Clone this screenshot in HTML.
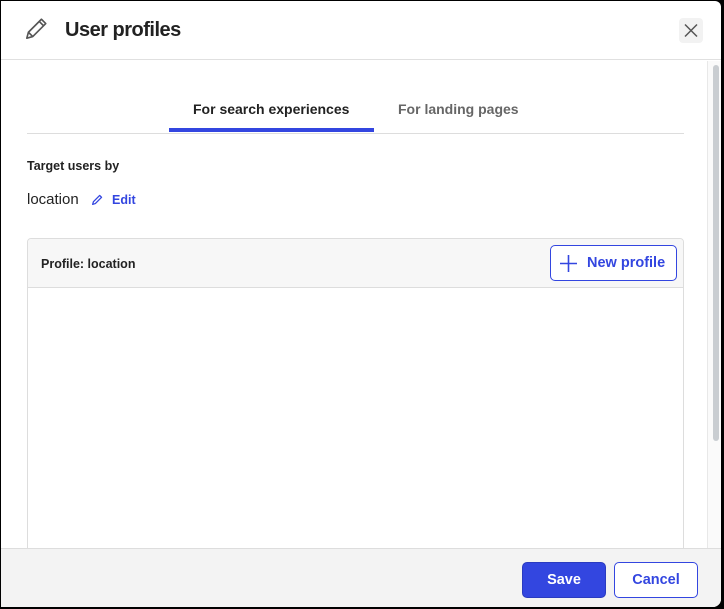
<!DOCTYPE html>
<html><head><style>
*{box-sizing:border-box;margin:0;padding:0}
html,body{width:724px;height:609px;overflow:hidden;background:#000;font-family:"Liberation Sans",Arial,sans-serif}
.dlg{position:absolute;left:1px;top:1px;width:720px;height:606px;background:#fff;border-radius:0 6px 8px 0;overflow:hidden}
.hdr{position:absolute;left:0;top:0;width:720px;height:59px;border-bottom:1px solid #e0e0e0}
.title{position:absolute;left:64px;top:18px;font-size:20px;font-weight:bold;color:#222;letter-spacing:-0.5px}
.close{position:absolute;left:678px;top:17px;width:24px;height:25px;background:#f2f2f2;border-radius:4px}
.tabs{position:absolute;left:26px;top:96px;width:657px;height:37px;border-bottom:1px solid #ddd}
.tab{position:absolute;top:4px;font-size:14px;font-weight:bold}
.t1{left:166px;color:#222}
.t2{left:371px;color:#666}
.ul{position:absolute;left:142px;top:31px;width:205px;height:4px;background:#3346e0}
.lbl{position:absolute;left:26px;top:158px;font-size:12.5px;font-weight:bold;color:#222}
.loc{position:absolute;left:26px;top:190px;font-size:15px;color:#222}
.edit{position:absolute;left:111px;top:192px;font-size:12.5px;font-weight:bold;color:#3346e0}
.card{position:absolute;left:26px;top:237px;width:657px;height:340px;border:1px solid #ddd;border-radius:4px;background:#fff}
.chd{height:49px;background:#f7f7f7;border-bottom:1px solid #ddd;border-radius:4px 4px 0 0}
.ct{position:absolute;left:13px;top:18px;font-size:12.5px;font-weight:bold;color:#222}
.np{position:absolute;left:522px;top:6px;width:127px;height:36px;border:1px solid #3346e0;border-radius:5px;background:#fff;color:#3346e0;font-size:14.5px;font-weight:bold}
.np span{position:absolute;left:36px;top:9px}
.sb{position:absolute;left:706px;top:60px;width:14px;height:490px;border-left:1px solid #e8e8e8;background:#fafafa}
.th{position:absolute;left:5px;top:4px;width:6px;height:376px;background:#c9cdd1;border-radius:3px}
.ftr{position:absolute;left:0;top:547px;width:720px;height:60px;background:#f3f3f3;border-top:1px solid #ddd}
.btn{position:absolute;top:13px;height:36px;border-radius:5px;font-size:14.5px;font-weight:bold;text-align:center;line-height:34px}
.save{left:521px;width:84px;background:#3346e0;color:#fff;border:1px solid #2a3bc0}
.cancel{left:613px;width:84px;background:#fff;color:#3346e0;border:1px solid #3346e0}
</style></head><body>
<div class="dlg">
 <div class="hdr">
  <svg style="position:absolute;left:22px;top:15px" width="26" height="26" viewBox="0 0 24 24" fill="none" stroke="#555" stroke-width="1.5" stroke-linejoin="round"><path d="M3.5 20.5 L5 15 L17 3 L21 7 L9 19 Z M15 5 L19 9 M5 15 L9 19"/></svg>
  <div class="title">User profiles</div>
  <div class="close"><svg width="24" height="25" viewBox="0 0 24 25" stroke="#555" stroke-width="1.5"><path d="M6 6.5 L18 18.5 M18 6.5 L6 18.5"/></svg></div>
 </div>
 <div class="tabs"><div class="tab t1">For search experiences</div><div class="tab t2">For landing pages</div><div class="ul"></div></div>
 <div class="lbl">Target users by</div>
 <div class="loc">location</div>
 <svg style="position:absolute;left:90px;top:192px" width="13" height="13" viewBox="0 0 24 24" fill="none" stroke="#3346e0" stroke-width="2.4" stroke-linejoin="round"><path d="M3 21 L4.5 16 L16 4.5 L19.5 8 L8 19.5 Z"/></svg>
 <div class="edit">Edit</div>
 <div class="card"><div class="chd"></div><div class="ct">Profile: location</div>
  <div class="np"><svg style="position:absolute;left:8px;top:8px" width="19" height="19" viewBox="0 0 19 19" stroke="#3346e0" stroke-width="1.6"><path d="M9.5 1 V18 M1 9.5 H18"/></svg><span>New profile</span></div>
 </div>
 <div class="sb"><div class="th"></div></div>
 <div class="ftr"><div class="btn save">Save</div><div class="btn cancel">Cancel</div></div>
</div>
</body></html>
